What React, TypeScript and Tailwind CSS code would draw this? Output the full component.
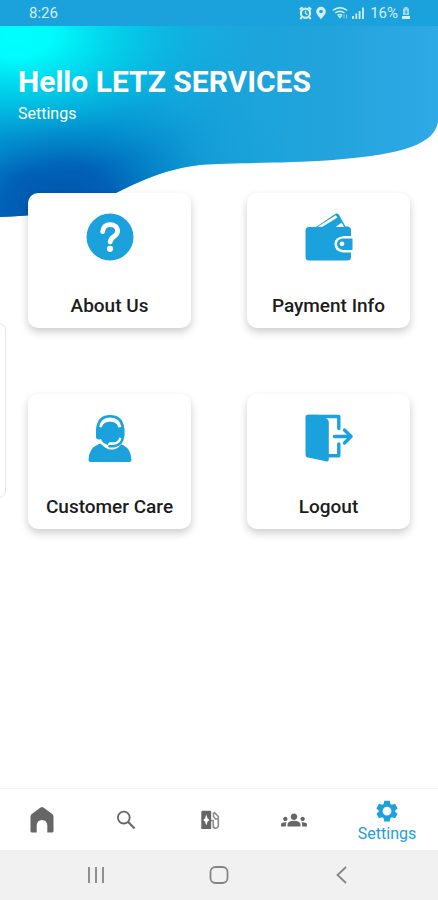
import type { ReactNode } from "react";
import { MdGroups } from "react-icons/md";

function HeaderWave() {
  return (
    <svg
      className="absolute inset-x-0 top-0 h-[191px] w-full"
      viewBox="0 0 438 191"
      preserveAspectRatio="none"
      aria-hidden="true"
    >
      <defs>
        <linearGradient id="base" x1="0" y1="0" x2="1" y2="0">
          <stop offset="0" stopColor="#00a4da" />
          <stop offset="0.45" stopColor="#18a6dc" />
          <stop offset="0.75" stopColor="#22a3dc" />
          <stop offset="1" stopColor="#2eaae6" />
        </linearGradient>
        <radialGradient id="deep" gradientUnits="userSpaceOnUse" cx="60" cy="195" r="240">
          <stop offset="0" stopColor="#0052aa" />
          <stop offset="0.25" stopColor="#005fb5" stopOpacity="0.97" />
          <stop offset="0.45" stopColor="#007ac4" stopOpacity="0.75" />
          <stop offset="0.7" stopColor="#0a8ecf" stopOpacity="0.3" />
          <stop offset="1" stopColor="#0a90d0" stopOpacity="0" />
        </radialGradient>
        <radialGradient
          id="cyan"
          gradientUnits="userSpaceOnUse"
          cx="0"
          cy="0"
          r="240"
          gradientTransform="translate(15 10) scale(1 0.58)"
        >
          <stop offset="0" stopColor="#00ffff" />
          <stop offset="0.16" stopColor="#00fbfc" />
          <stop offset="0.45" stopColor="#00deee" stopOpacity="0.7" />
          <stop offset="0.75" stopColor="#08c8ea" stopOpacity="0.25" />
          <stop offset="1" stopColor="#0cc0e8" stopOpacity="0" />
        </radialGradient>
        <clipPath id="wave">
          <path d="M0 0H438V96C434 118 405 128 333 134C280 138 230 136 200 139C150 145 125 165 95 176C65 187 30 190 0 191Z" />
        </clipPath>
      </defs>
      <g clipPath="url(#wave)">
        <rect width="438" height="191" fill="url(#base)" />
        <rect width="438" height="191" fill="url(#deep)" />
        <rect width="438" height="191" fill="url(#cyan)" />
      </g>
    </svg>
  );
}

function QuestionIcon() {
  return (
    <svg className="size-12" viewBox="0 0 48 48" fill="none" aria-hidden="true">
      <circle cx="24" cy="24" r="23.5" fill="#1ba1dc" />
      <path
        d="M16.6 18.6C17 14 20 11.6 24 11.6C28.4 11.6 31.6 14.2 31.6 18.2C31.6 23.4 24.2 23.6 24.2 29"
        stroke="#fff"
        strokeWidth="4.8"
        strokeLinecap="round"
      />
      <circle cx="24" cy="35.8" r="3.1" fill="#fff" />
    </svg>
  );
}

function WalletIcon() {
  return (
    <svg className="size-12" viewBox="0 0 48 48" fill="none" aria-hidden="true">
      <path d="M8 16L30.5 .8Q32.5-.2 33.8 1.6L40.5 13.5H43Q46 14 46 17V23H39Q29.5 24 29.5 31Q29.5 38.5 38 39.5H46V44Q46 47.5 42.5 47.5H4Q.5 47.5 .5 44V17.5Q.5 14 4 14H11Z" fill="#1ba1dc" />
      <path d="M12.5 13.8L30.8 2.2L32.4 4.4L17.5 13.8Z" fill="#fff" />
      <path d="M30.5 14L36.5 9.8L39.2 14Z" fill="#fff" />
      <path d="M47.5 25.5V37H38Q32 36 32 31Q32 26 38 25.5Z" fill="#1ba1dc" />
      <circle cx="37" cy="30.8" r="2.4" fill="#fff" />
    </svg>
  );
}

function SupportIcon() {
  return (
    <svg className="size-12" viewBox="0 0 48 48" fill="none" aria-hidden="true">
      <path d="M2.5 46Q3 34 12 30.5L14.5 29.5Q20 35.5 25 35.5Q31 36 35 30.5L38 31.5Q45 35.5 45.5 46Q45.5 48 43.5 48H4.5Q2.5 48 2.5 46Z" fill="#1ba1dc" />
      <path d="M24 7.6Q34.5 8.5 34.5 18.5Q34 28 28 28.4H23L21.5 31Q14 29 13.6 18.5Q14 8.5 24 7.6Z" fill="#1ba1dc" />
      <path d="M11.5 17V14Q13 2.2 24 2.2Q35.5 2.2 37 14V22Q36.5 31 28 32.2H23.5" stroke="#1ba1dc" strokeWidth="2.6" strokeLinecap="round" />
      <rect x="10" y="13" width="6" height="12.5" rx="2.4" fill="#1ba1dc" />
      <rect x="32.8" y="13" width="5.6" height="11" rx="2.2" fill="#1ba1dc" />
      <path d="M15 12.5Q17 6 24 6Q31 6 33 12.5" stroke="#fff" strokeWidth="2" strokeLinecap="round" />
      <path d="M24 29.5H27.5Q32.5 29 34 24.5" stroke="#fff" strokeWidth="1.8" strokeLinecap="round" />
    </svg>
  );
}

function LogoutIcon() {
  return (
    <svg className="size-12" viewBox="0 0 48 48" fill="none" aria-hidden="true">
      <path d="M3 2.5H33.8V14.5M33.8 30V41.8H23" stroke="#1ba1dc" strokeWidth="3.4" strokeLinecap="round" strokeLinejoin="round" />
      <path d="M.5 3Q.5 .8 3 .8H13L21.5 4.5Q23.8 5.5 23.8 8V45.5Q23.8 48 21 47.2L3 43.6Q.5 43 .5 40.5Z" fill="#1ba1dc" />
      <path d="M29.5 22.5H45.5M39.5 16L46 22.5L39.5 29" stroke="#1ba1dc" strokeWidth="3.4" strokeLinecap="round" strokeLinejoin="round" />
    </svg>
  );
}

function HomeIcon() {
  return (
    <svg className="h-[26px] w-6" viewBox="0 0 24 26" aria-hidden="true">
      <path
        d="M.5 9.5Q.5 8 1.8 7L10.6 .6Q12-.4 13.4 .6L22.2 7Q23.5 8 23.5 9.5V24Q23.5 25.5 22 25.5H17.3V18Q16.6 13.2 12 13Q7.4 13.2 6.7 18V25.5H2Q.5 25.5 .5 24Z"
        fill="currentColor"
      />
    </svg>
  );
}

function SearchIcon() {
  return (
    <svg className="size-5" viewBox="0 0 20 20" fill="none" stroke="currentColor" aria-hidden="true">
      <circle cx="7.8" cy="7.6" r="5.9" strokeWidth="1.8" />
      <path d="M12.2 12L18.6 18.4" strokeWidth="2.1" />
    </svg>
  );
}

function StationIcon() {
  return (
    <svg className="size-5" viewBox="0 0 20 20" fill="none" aria-hidden="true">
      <path d="M2.5 .8H10Q11.2 .8 11.2 2V19H1.3V2Q1.3 .8 2.5 .8Z" fill="currentColor" />
      <path d="M6.3 4.5L7.6 8.4L9.6 10L7.6 11.6L6.3 15.5L5 11.6L3.2 10L5 8.4Z" fill="#fff" />
      <path
        d="M11 10.5H13.2V16Q13.6 18.2 15.8 18.2Q18.2 18 18.3 15.8V6.5L14 2M13.5 2.5V6.5L15.5 9H18"
        stroke="currentColor"
        strokeWidth="1.6"
        opacity=".75"
      />
    </svg>
  );
}

function GearIcon() {
  return (
    <svg className="size-[22px]" viewBox="0 0 22 22" aria-hidden="true">
      <path
        fillRule="evenodd"
        fill="currentColor"
        d="M8.3 .7H13.7L14.4 3.9L15.9 4.8L19 3.8L21.6 8.4L19.2 10.4V11.8L21.6 13.8L19 18.3L15.9 17.3L14.4 18.2L13.7 21.4H8.3L7.6 18.2L6.1 17.3L3 18.3L.4 13.8L2.8 11.8V10.4L.4 8.4L3 3.8L6.1 4.8L7.6 3.9ZM11 6.7A4.4 4.4 0 1 0 11 15.5A4.4 4.4 0 1 0 11 6.7Z"
      />
    </svg>
  );
}

function StatusBar() {
  return (
    <div className="flex h-[26px] items-center justify-between bg-[#1ba1dc] pr-7 pl-[29px] text-[#d3effb]">
      <span className="text-[15px]">8:26</span>
      <div className="flex items-center gap-1">
        <svg className="h-3.5 w-[13px]" viewBox="0 0 13 14" fill="none" stroke="currentColor" aria-hidden="true">
          <circle cx="6.5" cy="7.2" r="4.6" strokeWidth="2.2" />
          <path d="M.8 3.6L3.6 1.2M12.2 3.6L9.4 1.2M2.8 11.2L1.2 13M10.2 11.2L11.8 13" strokeWidth="2" />
          <path d="M6.5 4.5V7.5L8.5 8.6" strokeWidth="1.2" />
        </svg>
        <svg className="h-3.5 w-2.5" viewBox="0 0 10 14" fill="currentColor" aria-hidden="true">
          <path fillRule="evenodd" d="M5 .8A4.8 4.8 0 0 1 9.8 5.6C9.8 8.6 6.5 11.2 5 13.4C3.5 11.2 .2 8.6 .2 5.6A4.8 4.8 0 0 1 5 .8ZM5 3.7A1.8 1.8 0 1 0 5 7.3A1.8 1.8 0 1 0 5 3.7Z" />
        </svg>
        <svg className="ml-0.5 h-3 w-4" viewBox="0 0 16 12" fill="none" stroke="currentColor" aria-hidden="true">
          <path d="M.8 3.5Q8-2 15.2 3.5M3.2 6Q8 2.5 12.5 6M5.5 8.3Q8 6.5 10.2 8.3" strokeWidth="1.5" />
          <path d="M8 11.5L6 9.2Q8 7.8 10 9.2Z" fill="currentColor" stroke="none" />
          <path d="M12 11.5V7.5M14.5 7.5V11.5" strokeWidth="1" opacity=".6" />
        </svg>
        <svg className="h-3 w-3" viewBox="0 0 12 12" stroke="currentColor" strokeWidth="1.8" aria-hidden="true">
          <path d="M1 12V9M4.3 12V6.5M7.6 12V4M11 12V.5" />
        </svg>
        <span className="ml-0.5 text-[15px]">16%</span>
        <svg className="h-3 w-2" viewBox="0 0 8 12" aria-hidden="true">
          <path d="M2.5 0H5.5V1.5H7V8H1V1.5H2.5Z" fill="currentColor" opacity=".75" />
          <path d="M0 9H8V12H0Z" fill="currentColor" />
          <path d="M4.8 2.2L2.5 5.5H4L3.5 8L5.8 4.8H4.3Z" fill="#1ba1dc" />
        </svg>
      </div>
    </div>
  );
}

const cards: { label: string; icon: ReactNode }[] = [
  { label: "About Us", icon: <QuestionIcon /> },
  { label: "Payment Info", icon: <WalletIcon /> },
  { label: "Customer Care", icon: <SupportIcon /> },
  { label: "Logout", icon: <LogoutIcon /> },
];

const tabs: { label: string; icon: ReactNode }[] = [
  { label: "Home", icon: <HomeIcon /> },
  { label: "Search", icon: <SearchIcon /> },
  { label: "Charging stations", icon: <StationIcon /> },
  { label: "Community", icon: <MdGroups className="size-[26px]" /> },
];

export default function App() {
  return (
    <div className="flex min-h-screen flex-col bg-white font-[Roboto,sans-serif]">
      <StatusBar />

      <main className="relative flex-1 overflow-hidden">
        <HeaderWave />

        {/* Edge panel handle */}
        <div className="absolute top-[297px] -left-2 h-[175px] w-3.5 rounded-lg border border-gray-200 bg-white" />

        <header className="relative h-[167px] px-[18px] pt-[38px] text-white">
          <h1 className="text-[30px] leading-9 font-bold">Hello LETZ SERVICES</h1>
          <p className="mt-1 text-base leading-5">Settings</p>
        </header>

        <div className="relative grid grid-cols-2 gap-x-14 gap-y-[66px] px-7">
          {cards.map((card) => (
            <button
              key={card.label}
              type="button"
              className="flex h-[135px] flex-col items-center justify-between rounded-[10px] bg-white px-2 pt-5 pb-2.5 shadow-[0_4px_9px_rgba(0,0,0,0.2)]"
            >
              {card.icon}
              <span className="text-[19px] leading-6 font-medium whitespace-nowrap text-[#1c1c1c]">{card.label}</span>
            </button>
          ))}
        </div>
      </main>

      <nav className="flex h-[62px] border-t border-gray-100 bg-white text-[#666666]">
        {tabs.map((tab) => (
          <button key={tab.label} type="button" aria-label={tab.label} className="flex flex-1 items-center justify-center">
            {tab.icon}
          </button>
        ))}
        <button
          type="button"
          aria-current="page"
          className="flex w-[102px] flex-col items-center justify-center gap-0.5 pt-1 text-[#1ba1dc]"
        >
          <GearIcon />
          <span className="text-base leading-5">Settings</span>
        </button>
      </nav>

      <div className="flex h-[50px] items-center justify-around bg-[#f1f1f1] px-[34px] text-[#858585]">
        <button type="button" aria-label="Recent apps">
          <svg className="size-5" viewBox="0 0 20 20" fill="none" stroke="currentColor" strokeWidth="1.8" aria-hidden="true">
            <path d="M3 2V18M10 2V18M17 2V18" />
          </svg>
        </button>
        <button type="button" aria-label="Home screen">
          <svg className="size-5" viewBox="0 0 20 20" fill="none" stroke="currentColor" strokeWidth="1.8" aria-hidden="true">
            <rect x="1.5" y="2" width="17" height="16" rx="5" />
          </svg>
        </button>
        <button type="button" aria-label="Back">
          <svg className="size-5" viewBox="0 0 20 20" fill="none" stroke="currentColor" strokeWidth="1.8" aria-hidden="true">
            <path d="M14 2L5.5 10L14 18" />
          </svg>
        </button>
      </div>
    </div>
  );
}
